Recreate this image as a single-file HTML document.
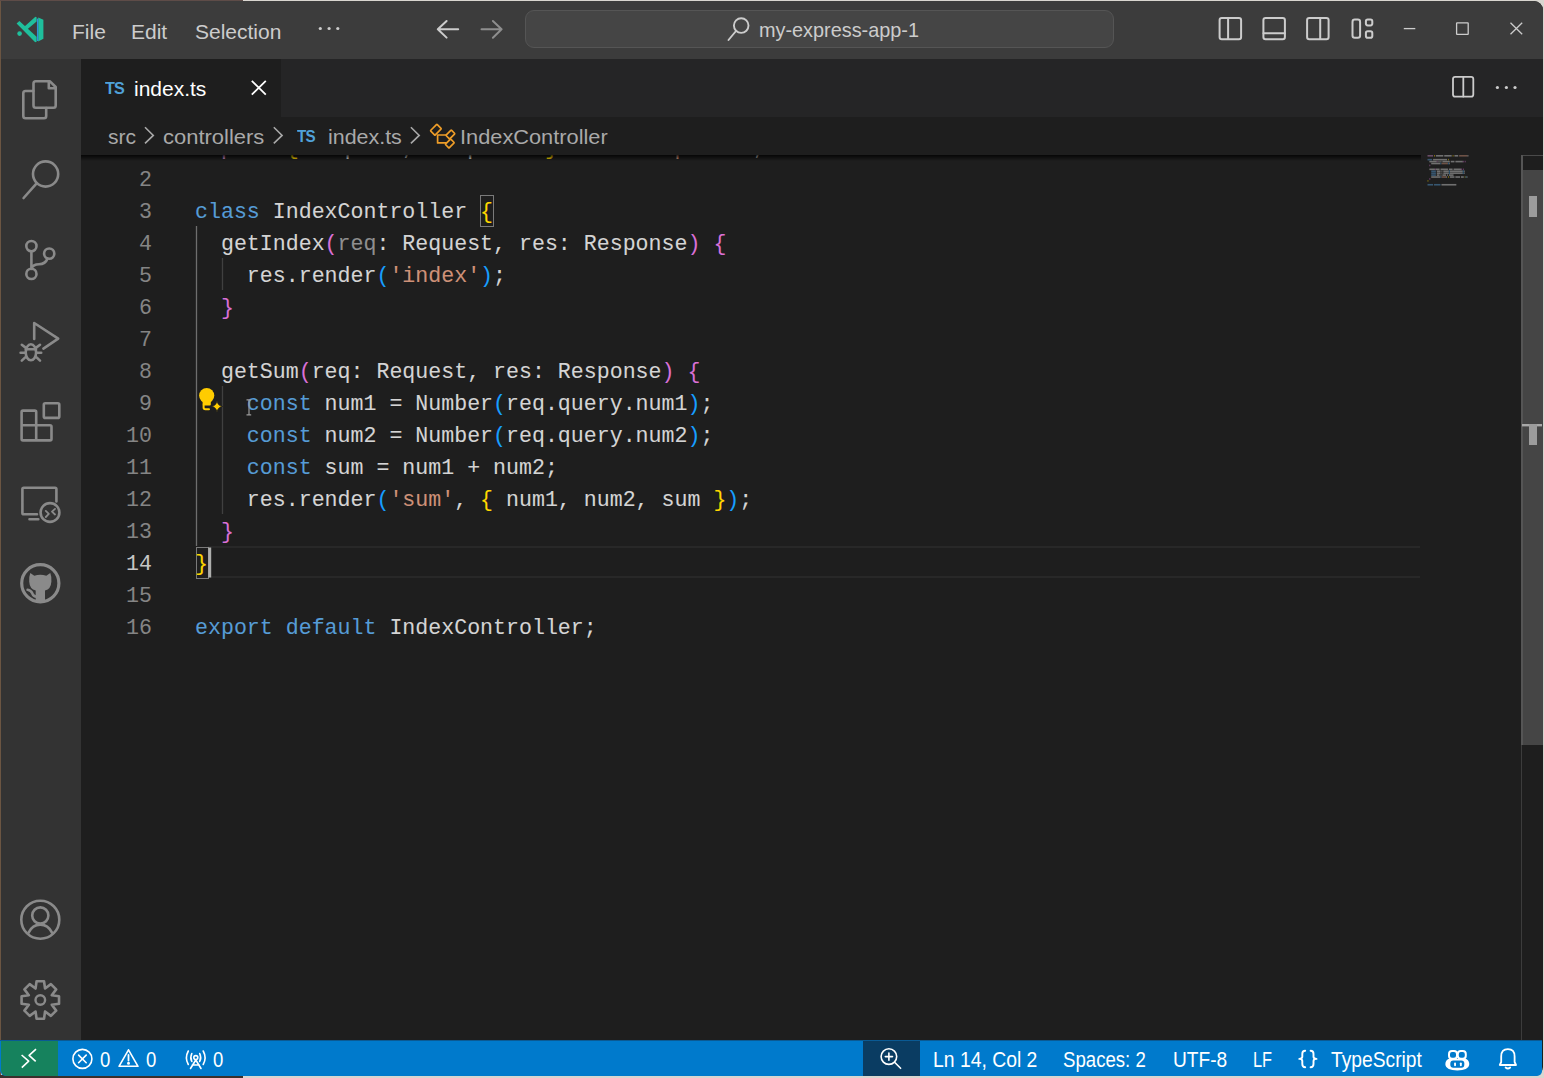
<!DOCTYPE html>
<html><head><meta charset="utf-8">
<style>
*{margin:0;padding:0;box-sizing:border-box}
html,body{width:1544px;height:1078px;overflow:hidden;background:#d9d6d0}
body{position:relative;font-family:"Liberation Sans",sans-serif;}
div{position:absolute}
#leftedge{left:0;top:0;width:1px;height:1078px;background:#6b5542}
#topedge{left:0;top:0;width:243px;height:1px;background:#5e4c48}
#win{left:1px;top:1px;width:1542px;height:1075px;background:#1e1e1e;border-radius:0 9px 9px 8px;overflow:hidden}
#title{left:0;top:0;width:1542px;height:58px;background:#3c3c3c;border-radius:0 9px 0 0}
.menu{top:19.5px;font-size:21px;color:#cccccc;line-height:24px;white-space:nowrap}
#cc{left:525px;top:10px;width:589px;height:38px;background:#454545;border:1px solid #555555;border-radius:9px}
#cctext{left:759px;top:18px;font-size:21px;transform:scaleX(0.945);transform-origin:0 0;color:#cccccc;line-height:24px;white-space:nowrap}
#act{left:0;top:58px;width:80px;height:982px;background:#333333}
#tabs{left:80px;top:58px;width:1462px;height:58px;background:#252526}
#tab1{left:80px;top:58px;width:200px;height:58px;background:#1e1e1e}
#tabname{left:134px;top:77px;font-size:21px;color:#ffffff;line-height:24px;white-space:nowrap}
.tsicon{font-weight:bold;color:#50a2da;white-space:nowrap;letter-spacing:-0.8px;transform:scaleX(0.95);transform-origin:0 0}
#crumbs{left:80px;top:116px;width:1462px;height:38px;background:#1e1e1e}
.crumb{top:125px;font-size:21px;color:#a9a9a9;line-height:24px;white-space:nowrap}
#shadow{left:80px;top:154px;width:1340px;height:6px;background:linear-gradient(#000000cc,#00000000)}
.cl{left:195px;font-family:"Liberation Mono",monospace;font-size:21.6px;-webkit-text-stroke:0.08px currentColor;white-space:pre;line-height:32px;color:#d4d4d4;height:32px}
.ln{left:80px;width:72px;text-align:right;font-family:"Liberation Mono",monospace;font-size:21.6px;line-height:32px;color:#858585}
.ln.act{color:#c6c6c6}
.k{color:#569cd6}.k2{color:#c586c0}.s{color:#ce9178}.b1{color:#ffd700}.b2{color:#da70d6}.b3{color:#179fff}.dim{color:#8f8f8f}
.b1m{color:#ffd700}
.bm{width:14px;height:32px;border:1.3px solid #7a7a7a}
#status{left:0;top:1040px;width:1542px;height:36px;background:#007acc;border-top:1px solid #0a5a94;border-radius:0 0 5px 6px}
.st{top:1047.5px;font-size:21.5px;transform-origin:0 0;color:#ffffff;line-height:24px;white-space:nowrap}
#remote{left:0;top:1041px;width:57px;height:35px;background:#16825d;border-radius:0 0 0 6px}
#zoombg{left:862px;top:1041px;width:57px;height:35px;background:#0a3c62}
#scroll{left:1521px;top:170px;width:22px;height:575px;background:#454545}
#scrollbox{left:1521px;top:155px;width:22px;height:15px;background:#1e1e1e;border-top:1px solid #4a4a4a}
#scrollline{left:1521px;top:155px;width:1px;height:885px;background:#3c3c3c}
#scrollline2{left:1521px;top:155px;width:1.5px;height:590px;background:#555555}
#curline{left:208px;top:546px;width:1212px;height:32px;border-top:2px solid #282828;border-bottom:2px solid #282828}
svg{position:absolute;left:0;top:0}
</style></head><body>
<div id="leftedge"></div>
<div id="topedge"></div>
<div style="left:0;top:1075px;width:243px;height:3px;background:#3a302c"></div>
<div id="win"></div>
<div id="title" style="left:1px;top:1px"></div>
<div id="cc"></div>
<div class="menu" style="left:72px">File</div>
<div class="menu" style="left:131px">Edit</div>
<div class="menu" style="left:195px">Selection</div>
<div id="cctext">my-express-app-1</div>
<div id="act" style="left:1px;top:59px"></div>
<div id="tabs" style="left:81px;top:59px"></div>
<div id="tab1" style="left:81px;top:59px"></div>
<div class="tsicon" style="left:104.5px;top:79px;font-size:17px;line-height:20px">TS</div>
<div id="tabname">index.ts</div>
<div id="crumbs" style="left:81px;top:117px"></div>
<div id="curline"></div>
<div class="bm" style="left:479.5px;top:194.5px"></div>
<div class="bm" style="left:195.5px;top:546.5px;width:13px"></div>
<div class="ln" style="top:164px">2</div>
<div class="ln" style="top:196px">3</div>
<div class="ln" style="top:228px">4</div>
<div class="ln" style="top:260px">5</div>
<div class="ln" style="top:292px">6</div>
<div class="ln" style="top:324px">7</div>
<div class="ln" style="top:356px">8</div>
<div class="ln" style="top:388px">9</div>
<div class="ln" style="top:420px">10</div>
<div class="ln" style="top:452px">11</div>
<div class="ln" style="top:484px">12</div>
<div class="ln" style="top:516px">13</div>
<div class="ln act" style="top:548px">14</div>
<div class="ln" style="top:580px">15</div>
<div class="ln" style="top:612px">16</div>
<div class="cl" style="top:132px"><span class="k2">import </span><span class="b1">{ </span>Request, Response <span class="b1">}</span> from <span class="s">'express'</span>;</div>
<div class="cl" style="top:196px"><span class="k">class</span> IndexController <span class="b1m">{</span></div>
<div class="cl" style="top:228px">  getIndex<span class="b2">(</span><span class="dim">req</span>: Request, res: Response<span class="b2">)</span> <span class="b2">{</span></div>
<div class="cl" style="top:260px">    res.render<span class="b3">(</span><span class="s">'index'</span><span class="b3">)</span>;</div>
<div class="cl" style="top:292px">  <span class="b2">}</span></div>
<div class="cl" style="top:356px">  getSum<span class="b2">(</span>req: Request, res: Response<span class="b2">)</span> <span class="b2">{</span></div>
<div class="cl" style="top:388px">    <span class="k">const</span> num1 = Number<span class="b3">(</span>req.query.num1<span class="b3">)</span>;</div>
<div class="cl" style="top:420px">    <span class="k">const</span> num2 = Number<span class="b3">(</span>req.query.num2<span class="b3">)</span>;</div>
<div class="cl" style="top:452px">    <span class="k">const</span> sum = num1 + num2;</div>
<div class="cl" style="top:484px">    res.render<span class="b3">(</span><span class="s">'sum'</span>, <span class="b1">{</span> num1, num2, sum <span class="b1">}</span><span class="b3">)</span>;</div>
<div class="cl" style="top:516px">  <span class="b2">}</span></div>
<div class="cl" style="top:548px"><span class="b1m">}</span></div>
<div class="cl" style="top:612px"><span class="k">export</span> <span class="k">default</span> IndexController;</div>
<div id="crumbs2" style="left:81px;top:117px;width:1461px;height:38px;background:#1e1e1e"></div>
<div class="crumb" style="left:108px">src</div>
<div class="crumb" style="left:162.5px;transform:scaleX(1.046);transform-origin:0 0">controllers</div>
<div class="tsicon" style="left:297px;top:128px;font-size:16px;line-height:18px">TS</div>
<div class="crumb" style="left:327.5px;transform:scaleX(1.02);transform-origin:0 0">index.ts</div>
<div class="crumb" style="left:460px;transform:scaleX(1.037);transform-origin:0 0">IndexController</div>
<div id="shadow" style="left:81px;top:155px"></div>
<div id="scroll"></div><div id="scrollbox"></div><div id="scrollline"></div><div id="scrollline2"></div>
<div id="status"></div>
<div id="remote" style="left:1px"></div>
<div id="zoombg" style="left:863px"></div>
<div class="st" style="left:100px;transform:scaleX(0.86)">0</div>
<div class="st" style="left:145.5px;transform:scaleX(0.86)">0</div>
<div class="st" style="left:212.5px;transform:scaleX(0.86)">0</div>
<div class="st" style="left:933px;transform:scaleX(0.90)">Ln 14, Col 2</div>
<div class="st" style="left:1063px;transform:scaleX(0.866)">Spaces: 2</div>
<div class="st" style="left:1172.5px;transform:scaleX(0.89)">UTF-8</div>
<div class="st" style="left:1252.5px;transform:scaleX(0.76)">LF</div>
<div class="st" style="left:1330.5px;transform:scaleX(0.895)">TypeScript</div>
<svg width="1544" height="1078" viewBox="0 0 1544 1078" fill="none" stroke-linecap="round" stroke-linejoin="round">
 <!-- logo -->
 <g stroke="none" fill="#1fbf9c">
  <path d="M16.6 23.4 L19.4 21 L36.6 36.8 L36.6 41.8 L35.2 42.2 Z"/>
  <path d="M23.4 27.6 L35.4 16.8 L36.6 17.2 L36.6 21.6 L26.2 30.2 Z"/>
  <circle cx="19.6" cy="33.6" r="2.3"/>
  <path d="M38.2 17.6 L43.4 19.8 V38.8 L38.2 41.6 Z"/>
 </g>
 <path d="M37.6 18.6 V41" stroke="#2f8fd8" stroke-width="1.3" stroke-linecap="butt"/>
 <!-- title dots -->
 <g fill="#cccccc" stroke="none"><circle cx="320.3" cy="28.5" r="1.6"/><circle cx="329.1" cy="28.5" r="1.6"/><circle cx="337.8" cy="28.5" r="1.6"/></g>
 <!-- arrows -->
 <path d="M446.6 21 L437.8 29.2 L446.6 37.6 M437.8 29.2 H458.2" stroke="#cccccc" stroke-width="2"/>
 <path d="M492.9 21 L501.6 29.3 L492.9 37.8 M501.6 29.3 H481.5" stroke="#8e8e8e" stroke-width="2"/>
 <!-- search -->
 <circle cx="741.2" cy="25.6" r="7.3" stroke="#cccccc" stroke-width="1.9"/>
 <path d="M736 31 L728.5 40" stroke="#cccccc" stroke-width="1.9"/>
 <!-- layout icons -->
 <g stroke="#cccccc" stroke-width="2">
  <rect x="1219.6" y="17.9" width="21.5" height="21.3" rx="2.2"/><path d="M1228.1 18 V39"/>
  <rect x="1263.4" y="17.9" width="21.5" height="21.3" rx="2.2"/><path d="M1263.5 33.3 H1284.8"/>
  <rect x="1307.1" y="17.9" width="21.5" height="21.3" rx="2.2"/><path d="M1320.2 18 V39"/>
  <rect x="1352.5" y="19.6" width="7.6" height="18.1" rx="2.3"/>
  <rect x="1365.9" y="19.6" width="6.4" height="5.8" rx="1.8"/>
  <rect x="1365.9" y="31.3" width="6.4" height="6.4" rx="1.8"/>
 </g>
 <!-- window controls -->
 <g stroke="#cccccc" stroke-width="1.3" stroke-linecap="butt">
  <path d="M1403.8 28.6 H1415.3"/>
  <rect x="1456.6" y="22.8" width="11.6" height="11.6" rx="0.5"/>
  <path d="M1510.5 22.7 L1522.2 34.2 M1522.2 22.7 L1510.5 34.2"/>
 </g>
 <!-- activity bar icons -->
 <g stroke="#8a8a8a" stroke-width="2.6">
  <path d="M33.5 83.5 Q33.5 81.3 35.7 81.3 H50 L55.7 87 V105.5 Q55.7 107.7 53.5 107.7 H35.7 Q33.5 107.7 33.5 105.5 Z M48.8 81.8 V88.3 H55.2"/>
  <path d="M33.3 91 H25.5 Q23.3 91 23.3 93.2 V116 Q23.3 118.2 25.5 118.2 H44 Q46.2 118.2 46.2 116 V108"/>
  <circle cx="45.6" cy="174" r="12.6"/><path d="M36.6 183.4 L23.6 198"/>
  <circle cx="31.4" cy="246.1" r="5.1"/><circle cx="49.2" cy="253.6" r="5.1"/><circle cx="31.4" cy="273.9" r="5.1"/>
  <path d="M31.4 251.2 V268.8 M47.5 258.5 Q45.5 264.2 39 264.2 Q33 264.2 31.4 268.8"/>
  <path d="M34.2 339 V323 L58.2 338.6 L43.4 348.6"/>
  <ellipse cx="30.9" cy="352.3" rx="5.2" ry="8"/><path d="M25.8 349.2 H36 M21.8 344.8 L25.6 347.6 M40 344.8 L36.2 347.6 M20.6 352.8 H25 M41.2 352.8 H36.8 M21.8 360.6 L25.2 357.4 M40 360.6 L36.6 357.4"/>
  <path d="M23 410.6 H34.8 Q36.2 410.6 36.2 412 V425.3 H50 Q51.5 425.3 51.5 426.8 V439 Q51.5 440.4 50 440.4 H23 Q21.6 440.4 21.6 439 V412 Q21.6 410.6 23 410.6 Z M21.6 425.3 H36.2 V440.4"/>
  <rect x="43.8" y="403.3" width="15.5" height="14.6" rx="1.5"/>
  <path d="M56.4 501.5 V489 Q56.4 487.7 55 487.7 H23.8 Q22.4 487.7 22.4 489 V513 Q22.4 514.3 23.8 514.3 H37 M29.5 519.2 H38.3"/>
  <circle cx="50" cy="512.5" r="9.4"/>
  <path d="M45.8 510.9 L48.8 513.9 L45.8 517 M55 508.9 L52 511.7 L55 514.5" stroke-width="1.8"/>
  <circle cx="40.3" cy="583.3" r="18.6" stroke-width="3.2"/>
  <circle cx="40.3" cy="919.7" r="19" stroke-width="2.6"/>
  <circle cx="40.3" cy="915.5" r="8.1" stroke-width="2.6"/>
  <path d="M28.6 932.6 Q32.5 924.6 40.3 924.6 Q48.1 924.6 52 932.6" stroke-width="2.6"/>
  <path d="M35.55 988.54 L36.57 981.27 L44.03 981.27 L45.05 988.54 L45.05 988.54 L50.91 984.12 L56.18 989.39 L51.76 995.25 L51.76 995.25 L59.03 996.27 L59.03 1003.73 L51.76 1004.75 L51.76 1004.75 L56.18 1010.61 L50.91 1015.88 L45.05 1011.46 L45.05 1011.46 L44.03 1018.73 L36.57 1018.73 L35.55 1011.46 L35.55 1011.46 L29.69 1015.88 L24.42 1010.61 L28.84 1004.75 L28.84 1004.75 L21.57 1003.73 L21.57 996.27 L28.84 995.25 L28.84 995.25 L24.42 989.39 L29.69 984.12 L35.55 988.54Z" stroke-width="2.6"/>
  <circle cx="40.3" cy="1000" r="4.8" stroke-width="2.4"/>
 </g>
 <path fill="#8a8a8a" stroke="none" d="M30.3 573 L34.3 575.8 Q37.3 574.8 40.3 574.8 Q43.3 574.8 46.3 575.8 L50.3 573 Q51.8 577 51.4 581.5 Q51 589.2 45 590.5 V602 H35.7 V590.5 Q29.6 589.2 29.2 581.5 Q28.8 577 30.3 573 Z"/>
 <path d="M27.6 589.8 Q31 590.2 32.4 593.6 Q33.8 596.6 36.4 596.6" stroke="#8a8a8a" stroke-width="2.6"/>
 <!-- tab close and TS -->
 <path d="M251.8 80.8 L265.8 94.6 M265.8 80.8 L251.8 94.6" stroke="#ffffff" stroke-width="1.8" stroke-linecap="butt"/>
 <!-- split editor + dots -->
 <rect x="1453" y="76.8" width="20.3" height="19.8" rx="2.2" stroke="#cccccc" stroke-width="1.8"/>
 <path d="M1463.3 77 V96.5" stroke="#cccccc" stroke-width="1.8"/>
 <g fill="#cccccc" stroke="none"><circle cx="1497.4" cy="87.5" r="1.6"/><circle cx="1506.4" cy="87.5" r="1.6"/><circle cx="1515" cy="87.5" r="1.6"/></g>
 <!-- breadcrumb chevrons -->
 <g stroke="#a9a9a9" stroke-width="1.6" stroke-linecap="butt" stroke-linejoin="miter">
  <path d="M145 127.3 L153.3 135.4 L145 143.4"/>
  <path d="M273.8 127.3 L282.1 135.4 L273.8 143.4"/>
  <path d="M410.9 127.3 L419.2 135.4 L410.9 143.4"/>
 </g>
 <!-- class icon -->
 <g stroke="#ee9d28" stroke-width="1.7">
  <path d="M437.6 135 V142.9 H447.4 M437.6 135 H447.4"/>
  <rect x="-4.6" y="-3.2" width="9.2" height="6.4" transform="translate(435.9 129.7) rotate(-45)" rx="0.6" fill="#1e1e1e"/>
  <rect x="-3.8" y="-2.6" width="7.6" height="5.2" transform="translate(450.4 134.5) rotate(-45)" rx="0.6" fill="#1e1e1e"/>
  <rect x="-3.8" y="-2.6" width="7.6" height="5.2" transform="translate(449.8 143.5) rotate(-45)" rx="0.6" fill="#1e1e1e"/>
 </g>
 <g opacity="0.45"><rect x="1427.50" y="155.00" width="5.58" height="1.6" fill="#c586c0"/><rect x="1434.01" y="155.00" width="0.93" height="1.6" fill="#ffd700"/><rect x="1435.87" y="155.00" width="7.44" height="1.6" fill="#d4d4d4"/><rect x="1444.24" y="155.00" width="7.44" height="1.6" fill="#d4d4d4"/><rect x="1452.61" y="155.00" width="0.93" height="1.6" fill="#ffd700"/><rect x="1454.47" y="155.00" width="3.72" height="1.6" fill="#d4d4d4"/><rect x="1459.12" y="155.00" width="8.37" height="1.6" fill="#ce9178"/><rect x="1467.49" y="155.00" width="0.93" height="1.6" fill="#d4d4d4"/><rect x="1427.50" y="158.86" width="4.65" height="1.6" fill="#569cd6"/><rect x="1433.08" y="158.86" width="13.95" height="1.6" fill="#d4d4d4"/><rect x="1447.96" y="158.86" width="0.93" height="1.6" fill="#ffd700"/><rect x="1429.36" y="160.79" width="7.44" height="1.6" fill="#d4d4d4"/><rect x="1436.80" y="160.79" width="0.93" height="1.6" fill="#da70d6"/><rect x="1437.73" y="160.79" width="2.79" height="1.6" fill="#8f8f8f"/><rect x="1440.52" y="160.79" width="0.93" height="1.6" fill="#d4d4d4"/><rect x="1442.38" y="160.79" width="7.44" height="1.6" fill="#d4d4d4"/><rect x="1450.75" y="160.79" width="3.72" height="1.6" fill="#d4d4d4"/><rect x="1455.40" y="160.79" width="7.44" height="1.6" fill="#d4d4d4"/><rect x="1462.84" y="160.79" width="0.93" height="1.6" fill="#da70d6"/><rect x="1464.70" y="160.79" width="0.93" height="1.6" fill="#da70d6"/><rect x="1431.22" y="162.72" width="9.30" height="1.6" fill="#d4d4d4"/><rect x="1440.52" y="162.72" width="0.93" height="1.6" fill="#179fff"/><rect x="1441.45" y="162.72" width="6.51" height="1.6" fill="#ce9178"/><rect x="1447.96" y="162.72" width="0.93" height="1.6" fill="#179fff"/><rect x="1448.89" y="162.72" width="0.93" height="1.6" fill="#d4d4d4"/><rect x="1429.36" y="164.65" width="0.93" height="1.6" fill="#da70d6"/><rect x="1429.36" y="168.51" width="5.58" height="1.6" fill="#d4d4d4"/><rect x="1434.94" y="168.51" width="0.93" height="1.6" fill="#da70d6"/><rect x="1435.87" y="168.51" width="3.72" height="1.6" fill="#d4d4d4"/><rect x="1440.52" y="168.51" width="7.44" height="1.6" fill="#d4d4d4"/><rect x="1448.89" y="168.51" width="3.72" height="1.6" fill="#d4d4d4"/><rect x="1453.54" y="168.51" width="7.44" height="1.6" fill="#d4d4d4"/><rect x="1460.98" y="168.51" width="0.93" height="1.6" fill="#da70d6"/><rect x="1462.84" y="168.51" width="0.93" height="1.6" fill="#da70d6"/><rect x="1431.22" y="170.44" width="4.65" height="1.6" fill="#569cd6"/><rect x="1436.80" y="170.44" width="3.72" height="1.6" fill="#d4d4d4"/><rect x="1441.45" y="170.44" width="0.93" height="1.6" fill="#d4d4d4"/><rect x="1443.31" y="170.44" width="5.58" height="1.6" fill="#d4d4d4"/><rect x="1448.89" y="170.44" width="0.93" height="1.6" fill="#179fff"/><rect x="1449.82" y="170.44" width="13.02" height="1.6" fill="#d4d4d4"/><rect x="1462.84" y="170.44" width="0.93" height="1.6" fill="#179fff"/><rect x="1463.77" y="170.44" width="0.93" height="1.6" fill="#d4d4d4"/><rect x="1431.22" y="172.37" width="4.65" height="1.6" fill="#569cd6"/><rect x="1436.80" y="172.37" width="3.72" height="1.6" fill="#d4d4d4"/><rect x="1441.45" y="172.37" width="0.93" height="1.6" fill="#d4d4d4"/><rect x="1443.31" y="172.37" width="5.58" height="1.6" fill="#d4d4d4"/><rect x="1448.89" y="172.37" width="0.93" height="1.6" fill="#179fff"/><rect x="1449.82" y="172.37" width="13.02" height="1.6" fill="#d4d4d4"/><rect x="1462.84" y="172.37" width="0.93" height="1.6" fill="#179fff"/><rect x="1463.77" y="172.37" width="0.93" height="1.6" fill="#d4d4d4"/><rect x="1431.22" y="174.30" width="4.65" height="1.6" fill="#569cd6"/><rect x="1436.80" y="174.30" width="2.79" height="1.6" fill="#d4d4d4"/><rect x="1440.52" y="174.30" width="0.93" height="1.6" fill="#d4d4d4"/><rect x="1442.38" y="174.30" width="3.72" height="1.6" fill="#d4d4d4"/><rect x="1447.03" y="174.30" width="0.93" height="1.6" fill="#d4d4d4"/><rect x="1448.89" y="174.30" width="4.65" height="1.6" fill="#d4d4d4"/><rect x="1431.22" y="176.23" width="9.30" height="1.6" fill="#d4d4d4"/><rect x="1440.52" y="176.23" width="0.93" height="1.6" fill="#179fff"/><rect x="1441.45" y="176.23" width="4.65" height="1.6" fill="#ce9178"/><rect x="1446.10" y="176.23" width="0.93" height="1.6" fill="#d4d4d4"/><rect x="1447.96" y="176.23" width="0.93" height="1.6" fill="#ffd700"/><rect x="1449.82" y="176.23" width="4.65" height="1.6" fill="#d4d4d4"/><rect x="1455.40" y="176.23" width="4.65" height="1.6" fill="#d4d4d4"/><rect x="1460.98" y="176.23" width="2.79" height="1.6" fill="#d4d4d4"/><rect x="1464.70" y="176.23" width="0.93" height="1.6" fill="#ffd700"/><rect x="1465.63" y="176.23" width="0.93" height="1.6" fill="#179fff"/><rect x="1466.56" y="176.23" width="0.93" height="1.6" fill="#d4d4d4"/><rect x="1429.36" y="178.16" width="0.93" height="1.6" fill="#da70d6"/><rect x="1427.50" y="180.09" width="0.93" height="1.6" fill="#ffd700"/><rect x="1427.50" y="183.95" width="5.58" height="1.6" fill="#569cd6"/><rect x="1434.01" y="183.95" width="6.51" height="1.6" fill="#569cd6"/><rect x="1441.45" y="183.95" width="14.88" height="1.6" fill="#d4d4d4"/></g>
 <!-- guides -->
 <path d="M196.5 226 V546" stroke="#6e6e6e" stroke-width="1.3" stroke-linecap="butt"/>
 <path d="M222.5 258 V290 M222.5 386 V514" stroke="#404040" stroke-width="1.3" stroke-linecap="butt"/>
 <!-- cursor -->
 <rect x="208.2" y="547.5" width="3" height="30" fill="#aeafad" stroke="none"/>
 <!-- lightbulb -->
 <g fill="#ffcc00" stroke="none">
  <circle cx="206.7" cy="395.6" r="7.6"/>
  <rect x="202.6" y="399" width="8.2" height="6.5" rx="1"/>
 </g>
 <path d="M203.6 405 V407.5 Q203.6 409.3 205.4 409.3 H209" stroke="#ffcc00" stroke-width="2"/>
 <path d="M217 400.8 Q217.7 405.8 222.7 406.5 Q217.7 407.2 217 412.2 Q216.3 407.2 211.3 406.5 Q216.3 405.8 217 400.8 Z" fill="#ffcc00" stroke="#1e1e1e" stroke-width="0.8"/>
 <!-- mouse ibeam -->
 <path d="M246.5 399.8 H251.2 M249 399.8 V414.8 M246.5 414.8 H251.2" stroke="#9a9a9a" stroke-width="1.2" stroke-linecap="butt"/>
 <!-- scrollbar small rects -->
 <rect x="1529" y="196" width="8" height="21" fill="#9c9c9c" stroke="none"/>
 <rect x="1522" y="424" width="20" height="2.4" fill="#a8a8a8" stroke="none"/>
 <rect x="1529" y="424" width="8" height="21" fill="#9c9c9c" stroke="none"/>
 <!-- status icons -->
 <g stroke="#ffffff" stroke-width="1.6">
  <path d="M21.6 1055 L28.7 1061.2 L21.8 1067.6 M36 1049.1 L29.1 1055.3 L35.7 1061.4" stroke-linecap="butt"/>
  <circle cx="82.4" cy="1058.9" r="9.5"/>
  <path d="M78.6 1055.1 L86.2 1062.7 M86.2 1055.1 L78.6 1062.7"/>
  <path d="M128.5 1049.8 L138 1066.3 H119 Z"/>
  <path d="M128.5 1055 V1060.5" stroke-width="1.8"/>
  <circle cx="128.5" cy="1063.3" r="0.7" fill="#fff"/>
  <path d="M188.3 1051 Q184.5 1058 188.3 1064.5 M203.2 1051 Q207 1058 203.2 1064.5 M191.8 1053.5 Q189.8 1057.5 191.8 1061.5 M199.7 1053.5 Q201.7 1057.5 199.7 1061.5"/>
  <circle cx="195.8" cy="1057.6" r="2"/>
  <path d="M195.8 1060 L190.5 1068.5 M195.8 1060 L201 1068.5 M192.3 1065 H199.3"/>
  <circle cx="888.9" cy="1056.6" r="7.8"/>
  <path d="M894.6 1062.3 L900.6 1068.3 M888.9 1053 V1060.2 M885.3 1056.6 H892.5"/>
  <path d="M1305.2 1050.8 Q1302.3 1050.8 1302.3 1053.8 V1056.8 Q1302.3 1058.9 1299.3 1058.9 Q1302.3 1058.9 1302.3 1061 V1064 Q1302.3 1067.2 1305.2 1067.2 M1310.6 1050.8 Q1313.5 1050.8 1313.5 1053.8 V1056.8 Q1313.5 1058.9 1316.5 1058.9 Q1313.5 1058.9 1313.5 1061 V1064 Q1313.5 1067.2 1310.6 1067.2" stroke-width="1.9"/>
  <path d="M1507.9 1049.2 Q1501.2 1049.2 1501.2 1056.5 V1062 L1499.8 1065 H1516 L1514.6 1062 V1056.5 Q1514.6 1049.2 1507.9 1049.2 Z M1505.6 1067.5 Q1507.9 1069.5 1510.2 1067.5" stroke-width="1.8"/>
 </g>
 <!-- copilot -->
 <path fill="#ffffff" stroke="none" d="M1448.3 1059 H1466.3 Q1469.6 1060.8 1469.2 1065 Q1468.4 1070.4 1457.3 1070.4 Q1446.2 1070.4 1445.4 1065 Q1445 1060.8 1448.3 1059 Z"/>
 <rect x="1450.3" y="1060.6" width="14" height="7.2" rx="3" fill="#007acc" stroke="none"/>
 <g fill="#ffffff" stroke="none"><rect x="1454.1" y="1062.4" width="1.9" height="3.8" rx="0.9"/><rect x="1459.9" y="1062.4" width="1.9" height="3.8" rx="0.9"/></g>
 <g stroke="#ffffff" stroke-width="2"><rect x="1449" y="1051.1" width="8" height="7.6" rx="3"/><rect x="1457.8" y="1051.1" width="8" height="7.6" rx="3"/></g>
</svg>
</body></html>
